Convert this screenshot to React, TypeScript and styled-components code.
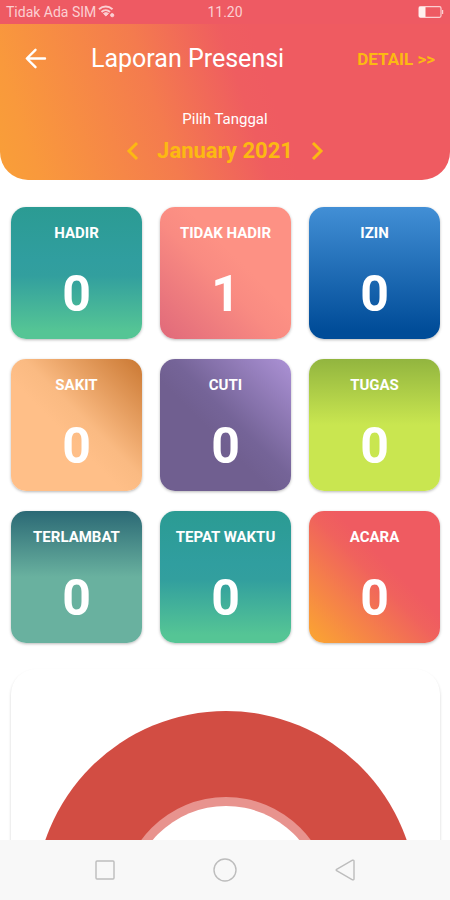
import React from "react";
import styled, { createGlobalStyle } from "styled-components";

const GlobalStyle = createGlobalStyle`
  * { box-sizing: border-box; }
  body { margin: 0; background: #fff; font-family: Roboto, "Liberation Sans", sans-serif; }
  button { font: inherit; color: inherit; background: none; border: 0; padding: 0; cursor: pointer; }
  svg { display: block; }
`;

const Screen = styled.div`
  display: flex;
  flex-direction: column;
  height: 100vh;
  overflow: hidden;
`;

const StatusBar = styled.div`
  display: grid;
  grid-template-columns: 1fr auto 1fr;
  align-items: center;
  flex: none;
  height: 24px;
  padding: 0 6px;
  background: #ee5a63;
  color: #fbcfd2;
  font-size: 14px;
  line-height: 16px;
`;

const Carrier = styled.div`
  display: flex;
  align-items: center;
  gap: 2px;
`;

const Battery = styled.div`
  justify-self: end;
`;

const Header = styled.header`
  flex: none;
  padding: 12px 15px 12px;
  border-radius: 0 0 28px 28px;
  background: linear-gradient(72deg, #f99f38 0%, #f9993c 8%, #f47b4e 36%, #ef5d60 54%, #ef5b61 60%, #ef5b61 100%);
  color: #fff;
`;

const TitleRow = styled.div`
  display: flex;
  align-items: center;
  height: 46px;
`;

const BackButton = styled.button`
  padding: 0 8px;
`;

const Title = styled.h1`
  flex: 1;
  margin: 0;
  padding-left: 34px;
  font-size: 25px;
  line-height: 34px;
  font-weight: 400;
`;

const DetailLink = styled.a`
  color: #fcb912;
  font-size: 17px;
  line-height: 24px;
  font-weight: 700;
  text-decoration: none;
`;

const DatePicker = styled.div`
  display: flex;
  flex-direction: column;
  align-items: center;
  padding-top: 27px;
`;

const DateLabel = styled.span`
  font-size: 15px;
  line-height: 20px;
`;

const MonthRow = styled.div`
  display: flex;
  align-items: center;
  gap: 18px;
  height: 39px;
  padding-top: 4px;
  color: #fcb912;
`;

const Month = styled.span`
  font-size: 22px;
  line-height: 32px;
  font-weight: 700;
`;

const Content = styled.main`
  flex: 1;
  min-height: 0;
  overflow: hidden;
  padding: 27px 10px 0 11px;
`;

const Cards = styled.section`
  display: grid;
  grid-template-columns: repeat(3, 1fr);
  gap: 20px 18px;
`;

const Card = styled.article<{ $fill: string }>`
  display: flex;
  flex-direction: column;
  align-items: center;
  height: 132px;
  padding-top: 16px;
  border-radius: 15px;
  background: ${(p) => p.$fill};
  color: #fff;
  box-shadow: 0 1px 3px rgba(0, 0, 0, 0.28);
`;

const CardLabel = styled.h2`
  margin: 0;
  font-size: 15px;
  line-height: 21px;
  font-weight: 700;
  white-space: nowrap;
`;

const CardValue = styled.span`
  padding-top: 20px;
  font-size: 50px;
  line-height: 60px;
  font-weight: 700;
`;

const ChartCard = styled.section`
  display: flex;
  justify-content: center;
  margin-top: 26px;
  padding: 42px 20px;
  border-radius: 25px;
  background: #fff;
  box-shadow: 0 2px 3px rgba(0, 0, 0, 0.18);
`;

const NavBar = styled.nav`
  display: flex;
  justify-content: center;
  flex: none;
  height: 60px;
  background: #f8f8f8;
  color: #bdbdbd;
`;

const NavButton = styled.button`
  display: flex;
  align-items: center;
  justify-content: center;
  width: 120px;
`;

const teal = "linear-gradient(180deg, #2b9b93 0%, #309e9f 40%, #329f9e 52%, #55c595 94%)";

const stats = [
  { label: "HADIR", value: 0, fill: teal },
  { label: "TIDAK HADIR", value: 1, fill: "linear-gradient(45deg, #e0697a 0%, #f98b82 45%, #fd9184 60%, #fd9184 100%)" },
  { label: "IZIN", value: 0, fill: "linear-gradient(180deg, #428fd5 0%, #004c98 94%)" },
  { label: "SAKIT", value: 0, fill: "linear-gradient(225deg, #ca7832 0%, #faba82 45%, #ffbf88 58%, #ffbf88 100%)" },
  { label: "CUTI", value: 0, fill: "linear-gradient(225deg, #ac92d6 0%, #756498 45%, #705f90 58%, #705f90 100%)" },
  { label: "TUGAS", value: 0, fill: "linear-gradient(180deg, #92b53f 0%, #c9e650 50%, #c9e650 100%)" },
  { label: "TERLAMBAT", value: 0, fill: "linear-gradient(180deg, #2b6975 0%, #69b19f 50%, #69b19f 100%)" },
  { label: "TEPAT WAKTU", value: 0, fill: teal },
  { label: "ACARA", value: 0, fill: "linear-gradient(45deg, #faa035 5%, #f0625d 50%, #ef5b61 60%, #ef5b61 100%)" },
];

const WifiIcon = () => (
  <svg width="18" height="14" viewBox="0 0 18 14" fill="none" stroke="currentColor" strokeWidth="2" aria-hidden="true">
    <path d="M1 4.2C5 .6 10.5 .6 14.5 4.2" />
    <path d="M3.5 7C6 4.7 9.5 4.7 12 7" />
    <path d="M5.5 8.5 7.8 11 10.5 8.5C9 7.4 7 7.4 5.5 8.5Z" fill="currentColor" strokeWidth="1" />
    <circle cx="14.2" cy="10.2" r="1.6" fill="currentColor" strokeWidth="1" />
  </svg>
);

const BatteryIcon = () => (
  <svg width="26" height="12" viewBox="0 0 26 12" aria-hidden="true">
    <rect x="1" y=".7" width="22" height="10.6" rx="1.5" fill="none" stroke="#fbcfd2" strokeWidth="1.2" />
    <rect x="1" y="1" width="6.5" height="10" fill="#fff0ee" />
    <path d="M24 4h1.2v4H24z" fill="#fbcfd2" />
  </svg>
);

const BackIcon = () => (
  <svg width="26" height="26" viewBox="0 0 26 26" fill="none" stroke="currentColor" strokeWidth="2.4" strokeLinecap="round" strokeLinejoin="round" aria-hidden="true">
    <path d="M22 12.5H4M12.5 3.8 3.8 12.5l8.7 8.7" />
  </svg>
);

const Chevron = ({ d }: { d: string }) => (
  <svg width="14" height="20" viewBox="0 0 14 20" fill="none" stroke="currentColor" strokeWidth="3" aria-hidden="true">
    <path d={d} />
  </svg>
);

const Donut = () => (
  <svg width="382" height="382" viewBox="0 0 382 382" role="img" aria-label="Presensi">
    <circle cx="191" cy="191" r="191" fill="#d24d43" />
    <circle cx="191" cy="191" r="105" fill="#e8938e" />
    <circle cx="191" cy="191" r="96" fill="#fff" />
  </svg>
);

export default function App() {
  return (
    <Screen>
      <GlobalStyle />
      <StatusBar>
        <Carrier>
          Tidak Ada SIM
          <WifiIcon />
        </Carrier>
        <span>11.20</span>
        <Battery>
          <BatteryIcon />
        </Battery>
      </StatusBar>
      <Header>
        <TitleRow>
          <BackButton aria-label="Kembali">
            <BackIcon />
          </BackButton>
          <Title>Laporan Presensi</Title>
          <DetailLink href="#detail">DETAIL &gt;&gt;</DetailLink>
        </TitleRow>
        <DatePicker>
          <DateLabel>Pilih Tanggal</DateLabel>
          <MonthRow>
            <button aria-label="Bulan sebelumnya">
              <Chevron d="M12 2 4 10l8 8" />
            </button>
            <Month>January 2021</Month>
            <button aria-label="Bulan berikutnya">
              <Chevron d="M2 2l8 8-8 8" />
            </button>
          </MonthRow>
        </DatePicker>
      </Header>
      <Content>
        <Cards>
          {stats.map((s) => (
            <Card key={s.label} $fill={s.fill}>
              <CardLabel>{s.label}</CardLabel>
              <CardValue>{s.value}</CardValue>
            </Card>
          ))}
        </Cards>
        <ChartCard>
          <Donut />
        </ChartCard>
      </Content>
      <NavBar>
        <NavButton aria-label="Aplikasi terbaru">
          <svg width="20" height="20" viewBox="0 0 20 20" fill="none" stroke="currentColor" strokeWidth="1.4">
            <rect x="1" y="1" width="18" height="18" rx="1" />
          </svg>
        </NavButton>
        <NavButton aria-label="Beranda">
          <svg width="24" height="24" viewBox="0 0 24 24" fill="none" stroke="currentColor" strokeWidth="1.4">
            <circle cx="12" cy="12" r="11" />
          </svg>
        </NavButton>
        <NavButton aria-label="Kembali ke sebelumnya">
          <svg width="20" height="22" viewBox="0 0 20 22" fill="none" stroke="currentColor" strokeWidth="1.4" strokeLinejoin="round">
            <path d="M1.6 10.3 17.5 1.2Q19 .8 19 2.2V19.8Q19 21.2 17.5 20.8L1.6 11.7Q.8 11 1.6 10.3Z" />
          </svg>
        </NavButton>
      </NavBar>
    </Screen>
  );
}
